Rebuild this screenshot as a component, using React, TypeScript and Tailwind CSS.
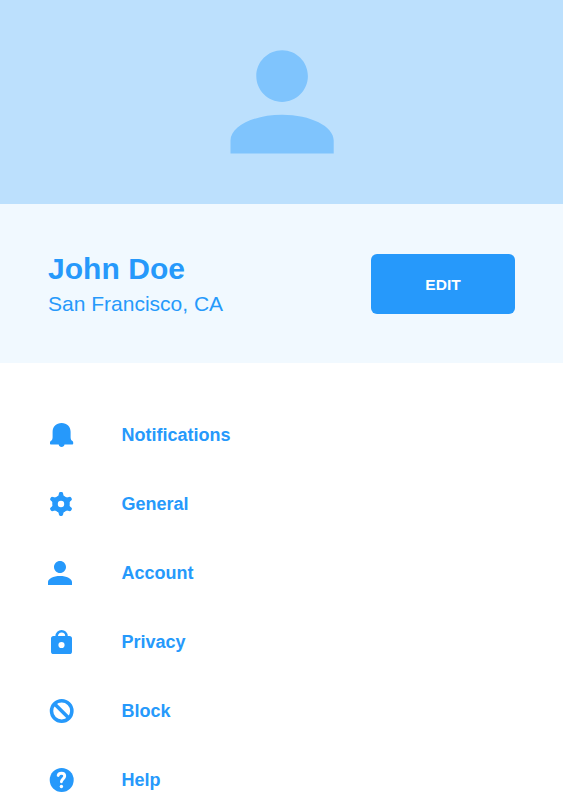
import React from "react";

const personPath =
  "M12 12c2.21 0 4-1.79 4-4s-1.79-4-4-4-4 1.79-4 4 1.79 4 4 4zm0 2c-4.42 0-8 1.79-8 4v2h16v-2c0-2.21-3.58-4-8-4z";

const Icon = ({ children }: { children: React.ReactNode }) => (
  <svg className="h-[25px] w-[27px]" viewBox="0 0 27 25" fill="currentColor">
    {children}
  </svg>
);

const items = [
  {
    label: "Notifications",
    icon: (
      <Icon>
        <path d="M13.600 1C8.200 1 4.600 4.800 4.600 9.700v5.600c0 2.100-.7 3-1.900 3.800-.5.4-.7.9-.7 1.500v1.100c0 .5.3.8.8.8h7.900c.2 1.500 1.300 2.500 2.900 2.500s2.700-1 2.900-2.500h7.900c.5 0 .8-.3.8-.8v-1.100c0-.6-.2-1.100-.7-1.500-1.200-.8-1.900-1.700-1.900-3.800V9.700C22.600 4.800 19 1 13.600 1z" />
      </Icon>
    ),
  },
  {
    label: "General",
    icon: (
      <Icon>
        <circle cx="13" cy="13" r="5.900" fill="none" stroke="currentColor" strokeWidth="5.400" />
        {[0, 60, 120, 180, 240, 300].map((angle) => (
          <path
            key={angle}
            transform={`rotate(${angle} 13 13)`}
            d="M10.900 2.400Q11.100 1 12.400 1h1.200q1.300 0 1.500 1.400l.3 1.500q.3 1.300 2 2L15 8h-4L8.600 5.900q1.700-.7 2-2z"
          />
        ))}
      </Icon>
    ),
  },
  {
    label: "Account",
    icon: (
      <Icon>
        <path transform="translate(-6 -5) scale(1.5)" d={personPath} />
      </Icon>
    ),
  },
  {
    label: "Privacy",
    icon: (
      <Icon>
        <path d="M8.700 8V7.100a4.900 4.900 0 0 1 9.800 0V8" fill="none" stroke="currentColor" strokeWidth="2.600" />
        <path
          fillRule="evenodd"
          d="M5.600 7h15.800A2.600 2.600 0 0 1 24 9.600v12.800a2.600 2.600 0 0 1-2.600 2.600H5.600A2.600 2.600 0 0 1 3 22.400V9.600A2.600 2.600 0 0 1 5.600 7zM13.500 12.900a3.100 3.100 0 1 0 0 6.200 3.100 3.100 0 0 0 0-6.200z"
        />
      </Icon>
    ),
  },
  {
    label: "Block",
    icon: (
      <Icon>
        <g fill="none" stroke="currentColor" strokeWidth="3.500">
          <circle cx="13.700" cy="13" r="10.200" />
          <path d="m6.400 5.700 14.600 14.600" />
        </g>
      </Icon>
    ),
  },
  {
    label: "Help",
    icon: (
      <Icon>
        <circle cx="13.700" cy="13" r="12" />
        <path
          d="M10.200 8.400C10.600 6.900 11.700 6.200 13.400 6.200c2 0 3.300 1.100 3.300 2.900 0 2.700-3.200 2.900-3.300 5.700"
          fill="none"
          stroke="white"
          strokeWidth="2.900"
          strokeLinecap="round"
        />
        <circle cx="13.400" cy="19.500" r="1.700" fill="white" />
      </Icon>
    ),
  },
];

export default function App() {
  return (
    <main className="h-[792px] w-full overflow-hidden bg-white font-['Liberation_Sans',sans-serif] text-[#2699fb]">
      <header className="flex h-[204px] justify-center bg-[#bce0fd]">
        <svg className="mt-[50px] h-[104px] w-[105px] text-[#7fc4fd]" viewBox="0 0 105 104" fill="currentColor">
          <path transform="translate(-24.300 -25.500) scale(6.450)" d={personPath} />
        </svg>
      </header>
      <section className="flex h-[159px] items-center justify-between bg-[#f1f9ff] px-12">
        <div className="pt-[5px]">
          <h1 className="text-[30px] font-bold leading-9 tracking-[0.05px]">John Doe</h1>
          <p className="text-[21px] leading-[34px]">San Francisco, CA</p>
        </div>
        <button className="h-[60px] w-36 rounded-md bg-[#2699fb] pt-[3px] text-[15.5px] font-bold text-white">
          EDIT
        </button>
      </section>
      <nav className="pt-[37px]">
        {items.map(({ label, icon }) => (
          <a key={label} className="flex h-[69px] items-center px-12">
            <span className="w-[73.5px]">{icon}</span>
            <span className="pt-0.5 text-[18px] font-bold">{label}</span>
          </a>
        ))}
      </nav>
    </main>
  );
}
